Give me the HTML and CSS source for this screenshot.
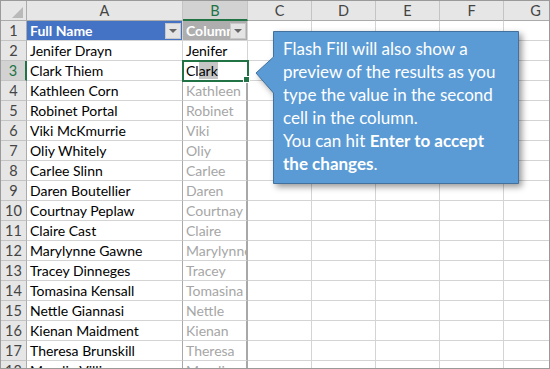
FILE: index.html
```html
<!DOCTYPE html>
<html lang="en">
<head>
    <meta charset="UTF-8">
    <title>Flash Fill preview</title>
    <link rel="stylesheet" href="styles.css">
</head>
<body>
    <div class="sheet">
        <div class="grid">
            <div class="hd corner"><span class="tri"></span></div>
            <div class="hd">A</div>
            <div class="hd sel">B</div>
            <div class="hd">C</div>
            <div class="hd">D</div>
            <div class="hd">E</div>
            <div class="hd">F</div>
            <div class="hd">G</div>

            <div class="rn">1</div>
            <div class="c th"><span class="lbl">Full Name</span><span class="drop"></span></div>
            <div class="c th gray"><span class="lbl">Column2</span><span class="drop"></span></div>
            <div class="c"></div><div class="c"></div><div class="c"></div><div class="c"></div><div class="c"></div>

            <div class="rn">2</div>
            <div class="c">Jenifer Drayn</div>
            <div class="c">Jenifer</div>
            <div class="c"></div><div class="c"></div><div class="c"></div><div class="c"></div><div class="c"></div>

            <div class="rn cur">3</div>
            <div class="c">Clark Thiem</div>
            <div class="c active">Cl<span class="hl">ark</span><span class="handle"></span></div>
            <div class="c"></div><div class="c"></div><div class="c"></div><div class="c"></div><div class="c"></div>
        </div>
        <div class="grid" id="rows"></div>

        <div class="callout">
            <svg class="bubble" width="272" height="162" viewBox="0 0 272 162">
                <path d="M19.5 2.5 H264.5 V154.5 H19.5 V64 L2 44 L19.5 28 Z" fill="#5b9bd5" stroke="#41719c" stroke-width="1"/>
            </svg>
            <div class="note">
                Flash Fill will also show a<br>
                preview of the results as you<br>
                type the value in the second<br>
                cell in the column.<br>
                You can hit <b>Enter to accept</b><br>
                <b>the changes</b>.
            </div>
        </div>
    </div>
    <script>
        var names = [
            ['Kathleen Corn', 'Kathleen'],
            ['Robinet Portal', 'Robinet'],
            ['Viki McKmurrie', 'Viki'],
            ['Oliy Whitely', 'Oliy'],
            ['Carlee Slinn', 'Carlee'],
            ['Daren Boutellier', 'Daren'],
            ['Courtnay Peplaw', 'Courtnay'],
            ['Claire Cast', 'Claire'],
            ['Marylynne Gawne', 'Marylynne'],
            ['Tracey Dinneges', 'Tracey'],
            ['Tomasina Kensall', 'Tomasina'],
            ['Nettle Giannasi', 'Nettle'],
            ['Kienan Maidment', 'Kienan'],
            ['Theresa Brunskill', 'Theresa'],
            ['Maudie Villis', 'Maudie']
        ];
        var rows = document.getElementById('rows');
        names.forEach(function (n, i) {
            var html = '<div class="rn">' + (i + 4) + '</div>' +
                '<div class="c">' + n[0] + '</div>' +
                '<div class="c preview">' + n[1] + '</div>';
            for (var k = 0; k < 5; k++) html += '<div class="c"></div>';
            rows.insertAdjacentHTML('beforeend', html);
        });
    </script>
</body>
</html>
```

FILE: styles.css
```css
body {
    margin: 0;
    background: #fff;
    font-family: 'Lato', 'Liberation Sans', sans-serif;
}
.sheet {
    position: relative;
    width: 550px;
    height: 369px;
    box-sizing: border-box;
    border: 1px solid #9a9a9a;
    overflow: hidden;
}
.grid {
    display: grid;
    grid-template-columns: 26px 156px 65px 64px 64px 64px 64px 64px;
    grid-auto-rows: 20px;
    width: 567px;
}
.hd, .rn, .c {
    box-sizing: border-box;
    border-right: 1px solid #d4d4d4;
    border-bottom: 1px solid #d4d4d4;
    white-space: nowrap;
    overflow: hidden;
}
.hd {
    background: #e6e6e6;
    border-right-color: #c4c4c4;
    border-bottom-color: #ababab;
    color: #444;
    font-size: 14.5px;
    line-height: 19px;
    text-align: center;
}
.hd.sel {
    background: #d2d2d2;
    color: #217346;
    border-bottom: 2px solid #217346;
}
.corner {
    position: relative;
    border-right-color: #ababab;
}
.corner .tri {
    position: absolute;
    right: 3px;
    bottom: 2px;
    width: 0;
    height: 0;
    border-left: 11px solid transparent;
    border-bottom: 11px solid #b9b9b9;
}
.rn {
    background: #e6e6e6;
    border-right-color: #ababab;
    border-bottom-color: #c4c4c4;
    color: #444;
    font-size: 14.5px;
    line-height: 19px;
    text-align: center;
}
.rn.cur {
    background: #d2d2d2;
    color: #217346;
    border-right: 2px solid #217346;
}
.c {
    position: relative;
    font-size: 14px;
    line-height: 19px;
    padding-left: 3px;
    color: #000;
}
.c.th {
    display: flex;
    align-items: center;
    background: #4472c4;
    color: #fff;
    font-weight: bold;
    padding-right: 1px;
}
.c.th.gray {
    background: #aeaeae;
}
.th .lbl {
    flex: 1;
    overflow: hidden;
}
.th .drop {
    position: relative;
    flex: none;
    width: 16px;
    height: 16px;
    box-sizing: border-box;
    background: #e4e4e4;
    border: 1px solid #c8c8c8;
}
.th .drop::after {
    content: '';
    position: absolute;
    left: 3px;
    top: 5px;
    border-left: 4px solid transparent;
    border-right: 4px solid transparent;
    border-top: 4px solid #666;
}
.c.active {
    overflow: visible;
    outline: 2px solid #217346;
    outline-offset: -1px;
    z-index: 2;
}
.hl {
    background: #c6c6c6;
}
.handle {
    position: absolute;
    right: -3px;
    bottom: -3px;
    width: 5px;
    height: 5px;
    background: #217346;
    border: 1px solid #fff;
}
.c.preview {
    color: #a6a6a6;
    border-left: 1px solid #a8a8a8;
    border-right: 2px solid #a8a8a8;
    margin-left: -1px;
    padding-left: 3px;
}
.callout {
    position: absolute;
    left: 253px;
    top: 28px;
    width: 272px;
    height: 162px;
}
.bubble {
    position: absolute;
    left: 0;
    top: 0;
    overflow: visible;
    filter: drop-shadow(3px 3px 3px rgba(0, 0, 0, 0.4));
}
.note {
    position: relative;
    padding: 8px 0 0 29px;
    color: #fff;
    font-size: 17px;
    line-height: 23px;
    white-space: nowrap;
}
```
